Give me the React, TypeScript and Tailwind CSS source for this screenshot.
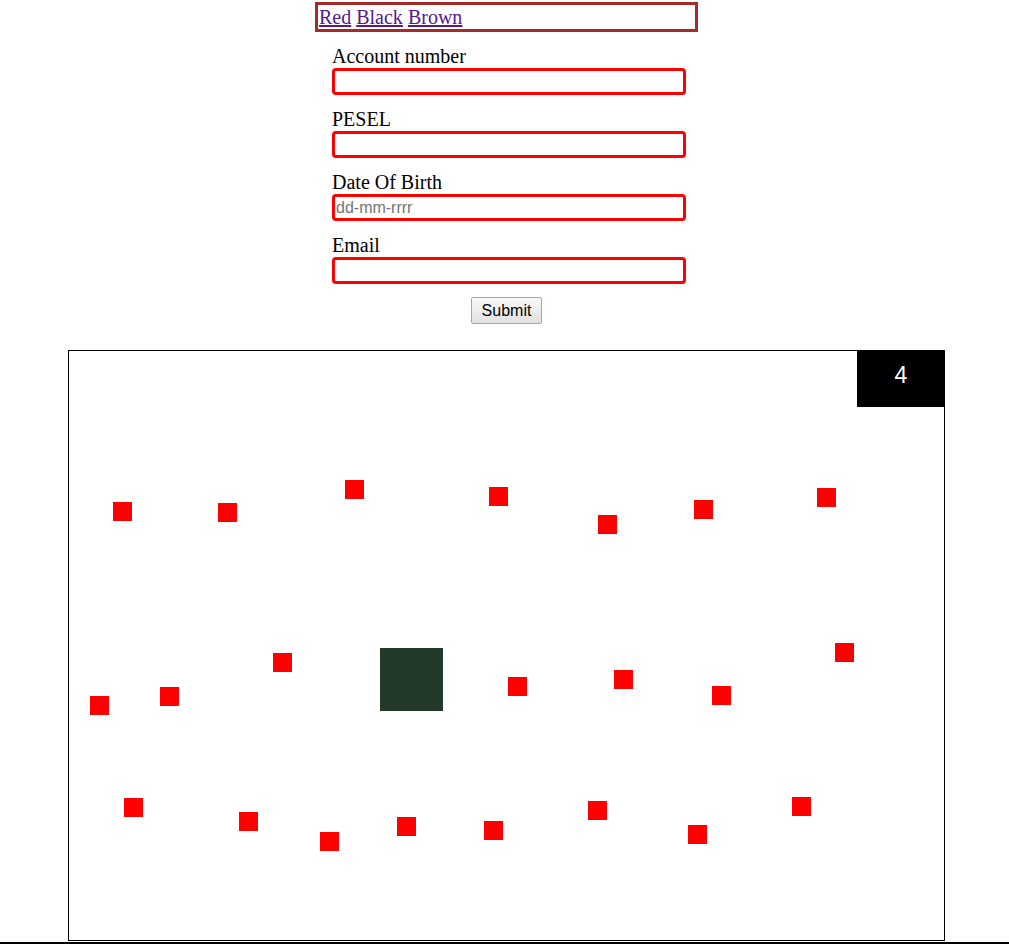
import React from "react";

const squares: [number, number][] = [
  [44, 151], [149, 152], [276, 129], [420, 136], [529, 164], [625, 149], [748, 137],
  [21, 345], [91, 336], [204, 302], [439, 326], [545, 319], [643, 335], [766, 292],
  [55, 447], [170, 461], [251, 481], [328, 466], [415, 470], [519, 450], [619, 474], [723, 446],
];

function Field({ label, placeholder }: { label: string; placeholder?: string }) {
  return (
    <div className="flex flex-col mb-[13px]">
      <label className="text-[20px] leading-[23px] text-black">{label}</label>
      <input
        placeholder={placeholder}
        className="w-[354px] h-[27px] border-[3px] border-[#ff0000] rounded-[4px] px-[1px] text-[16px] font-['Arial','Liberation_Sans',sans-serif] placeholder:text-[#757575] outline-none bg-white"
      />
    </div>
  );
}

export default function App() {
  return (
    <div className="w-[1009px] min-h-[945px] bg-white font-['Times_New_Roman','Liberation_Serif',serif] relative">
      <nav className="ml-[315px] mt-[2px] w-[383px] h-[30px] border-[3px] border-[#a52a2a] pl-[1px] text-[20px] leading-[24px]">
        <a href="#" className="underline text-[#551a8b]">Red</a>{" "}
        <a href="#" className="underline text-[#551a8b]">Black</a>{" "}
        <a href="#" className="underline text-[#551a8b]">Brown</a>
      </nav>
      <form className="ml-[332px] mt-[13px] w-[354px] flex flex-col" onSubmit={(e) => e.preventDefault()}>
        <Field label="Account number" />
        <Field label="PESEL" />
        <Field label="Date Of Birth" placeholder="dd-mm-rrrr" />
        <Field label="Email" />
        <div className="flex">
          <button
            type="submit"
            className="ml-[139px] w-[71px] h-[27px] border border-[#a6a6a6] rounded-[2px] bg-gradient-to-b from-[#f8f8f8] to-[#e1e1e1] text-[16px] text-black font-['Arial','Liberation_Sans',sans-serif] leading-none"
          >
            Submit
          </button>
        </div>
      </form>
      <div className="ml-[68px] mt-[26px] w-[877px] h-[591px] border border-black relative">
        <div className="absolute top-[-1px] right-[-1px] w-[88px] h-[57px] bg-black text-white flex items-center justify-center text-[23px] font-['Arial','Liberation_Sans',sans-serif] pb-[6px]">
          4
        </div>
        {squares.map(([x, y], i) => (
          <div key={i} className="absolute w-[19px] h-[19px] bg-[#ff0000]" style={{ left: x, top: y }} />
        ))}
        <div className="absolute left-[311px] top-[297px] w-[63px] h-[63px] bg-[#233a2b]" />
      </div>
      <div className="mt-[1px] w-full h-[2px] bg-black" />
    </div>
  );
}
